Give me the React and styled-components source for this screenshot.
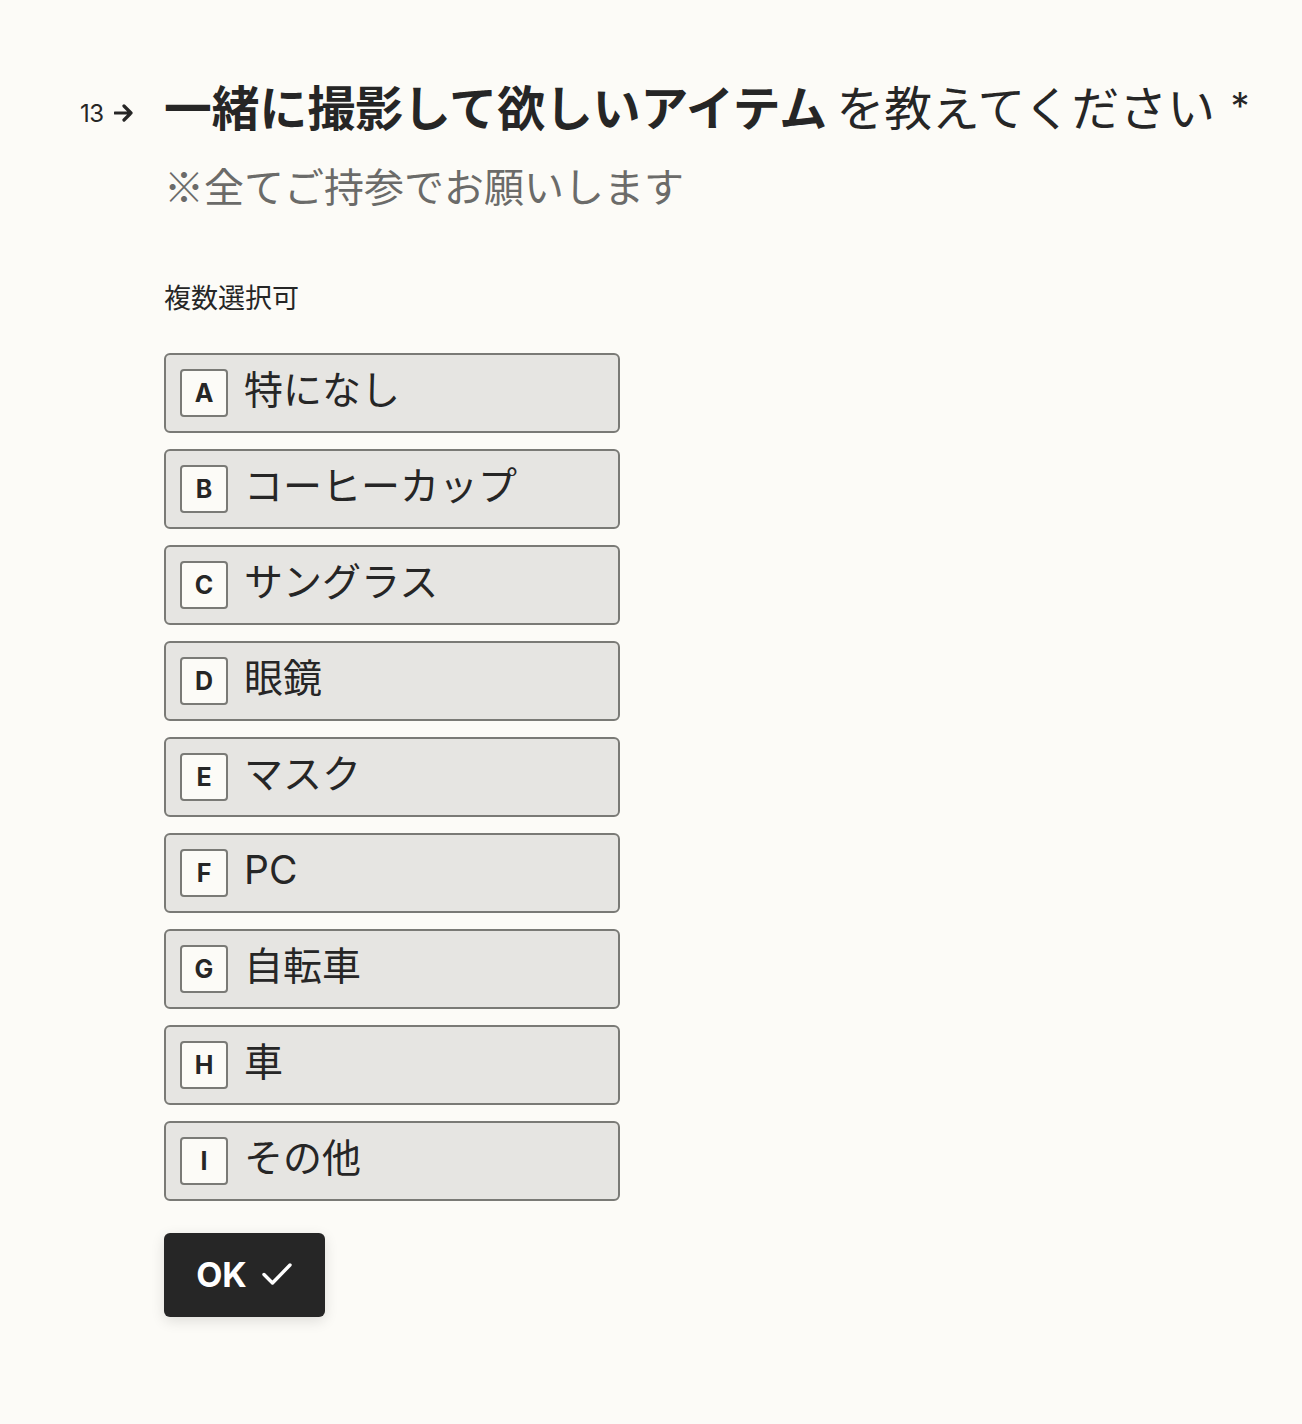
import React from 'react';
import styled, { createGlobalStyle } from 'styled-components';

const GlobalStyle = createGlobalStyle`
    html, body {
        margin: 0;
        padding: 0;
        background: #fcfbf7;
    }
    body {
        font-family: Inter, "Noto Sans CJK JP", sans-serif;
        color: #262626;
    }
`;

const choices = [
    { key: 'A', label: '特になし' },
    { key: 'B', label: 'コーヒーカップ' },
    { key: 'C', label: 'サングラス' },
    { key: 'D', label: '眼鏡' },
    { key: 'E', label: 'マスク' },
    { key: 'F', label: 'PC' },
    { key: 'G', label: '自転車' },
    { key: 'H', label: '車' },
    { key: 'I', label: 'その他' },
];

function ArrowIcon() {
    return (
        <svg width="20" height="18" viewBox="0 0 20 18" fill="none">
            <path d="M1 9h16M10 2l7 7-7 7" stroke="#262626" strokeWidth="3.2" strokeLinecap="round" strokeLinejoin="round" />
        </svg>
    );
}

function CheckIcon() {
    return (
        <svg width="32" height="26" viewBox="0 0 32 26" fill="none">
            <path d="M3 13.5l8.5 8.5L29 4" stroke="#ffffff" strokeWidth="3.4" strokeLinecap="round" strokeLinejoin="round" />
        </svg>
    );
}

function App() {
    return (
        <>
            <GlobalStyle />
            <Page>
                <Counter>
                    <span>13</span>
                    <ArrowIcon />
                </Counter>
                <Content>
                    <Title>
                        <strong>一緒に撮影して欲しいアイテム</strong> を教えてください <Req>*</Req>
                    </Title>
                    <Subtitle>※全てご持参でお願いします</Subtitle>
                    <Hint>複数選択可</Hint>
                    <ChoiceList>
                        {choices.map((c) => (
                            <Choice key={c.key}>
                                <KeyBox>{c.key}</KeyBox>
                                <ChoiceLabel>{c.label}</ChoiceLabel>
                            </Choice>
                        ))}
                    </ChoiceList>
                    <OkButton>
                        OK
                        <CheckIcon />
                    </OkButton>
                </Content>
            </Page>
        </>
    );
}

const Page = styled.div`
    display: flex;
    padding: 78px 0 100px 80px;
    min-height: 1424px;
    box-sizing: border-box;
`;

const Counter = styled.div`
    width: 84px;
    flex-shrink: 0;
    display: flex;
    align-items: center;
    gap: 10px;
    height: 70px;
    span {
        font-size: 24px;
        font-weight: 400;
        letter-spacing: -0.5px;
    }
`;

const Content = styled.div`
    display: flex;
    flex-direction: column;
    align-items: flex-start;
`;

const Title = styled.h1`
    margin: 0;
    font-size: 47.8px;
    line-height: 56px;
    font-weight: 400;
    word-spacing: -4px;
    white-space: nowrap;
    strong {
        font-weight: 700;
    }
`;

const Req = styled.span`
    margin-left: 6px;
    font-size: 38px;
    vertical-align: 6px;
`;

const Subtitle = styled.p`
    margin: 23px 0 0;
    font-family: "Noto Sans CJK JP", sans-serif;
    font-size: 40px;
    line-height: 50px;
    color: #6b6b69;
`;

const Hint = styled.p`
    margin: 69px 0 0;
    font-size: 27px;
    line-height: 40px;
`;

const ChoiceList = styled.div`
    display: flex;
    flex-direction: column;
    gap: 16px;
    margin-top: 34px;
`;

const Choice = styled.div`
    width: 456px;
    height: 80px;
    box-sizing: border-box;
    display: flex;
    align-items: center;
    gap: 16px;
    padding: 0 14px;
    background: #e6e5e2;
    border: 2px solid #7a7a76;
    border-radius: 6px;
`;

const KeyBox = styled.span`
    width: 48px;
    height: 48px;
    box-sizing: border-box;
    display: flex;
    align-items: center;
    justify-content: center;
    background: #fcfbf7;
    border: 2px solid #7a7a76;
    border-radius: 4px;
    font-size: 25px;
    font-weight: 700;
`;

const ChoiceLabel = styled.span`
    font-size: 39px;
    line-height: 48px;
    margin-top: -6px;
`;

const OkButton = styled.button`
    margin-top: 32px;
    width: 161px;
    height: 84px;
    display: flex;
    align-items: center;
    justify-content: center;
    gap: 14px;
    background: #262626;
    color: #ffffff;
    border: none;
    border-radius: 6px;
    box-shadow: 0 4px 14px rgba(0, 0, 0, 0.12);
    font-family: Inter, "Noto Sans CJK JP", sans-serif;
    font-size: 34px;
    font-weight: 700;
    padding: 0 0 2px;
`;

export default App;
